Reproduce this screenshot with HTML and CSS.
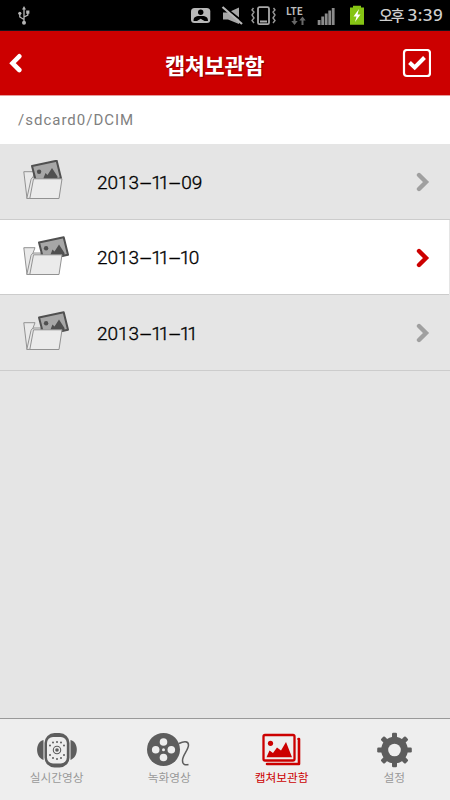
FILE: index.html
```
<!DOCTYPE html>
<html lang="ko">
<head>
<meta charset="utf-8">
<title>캡쳐보관함</title>
<link rel="stylesheet" href="styles.css">
</head>
<body>
<svg class="defs" width="0" height="0">
  <defs>
    <g id="photo">
      <path d="M1.5 6.5 26.2 1.2 30.5 18.8 6 24Z" fill="#a7a7a7" stroke="#505050" stroke-width="2" stroke-linejoin="round"/>
      <circle cx="8.6" cy="12.3" r="2.2" fill="#505050"/>
      <path d="M13 18.500 15 13.500 17 15.500 21.500 8.500 27 17 27 20 13 22Z" fill="#505050"/>
    </g>
    <g id="folder-back" fill="#e9e9e9" stroke="#929292" stroke-width="1">
      <path d="M7 38.500H4L.8 11.700H12L10 17Z"/>
      <path d="M3.800 38.500 8 19.500Q9 17 11 17H18L14 38Z"/>
    </g>
    <path id="folder-front" d="M10.500 18.800H39L36 38.500H6.800Z" fill="#ebebeb" stroke="#929292" stroke-width="1"/>
    <path id="arrow" d="M3 3 10 10 3 17" fill="none" stroke="currentColor" stroke-width="4.400" stroke-linecap="round" stroke-linejoin="miter"/>
  </defs>
</svg>
<div class="screen">
  <div class="status">
    <svg class="usb" width="14" height="20" viewBox="17 6 14 20" fill="none" stroke="#b5b5b5" stroke-width="1.300">
      <path d="M24 9V22M24 19.500 19.800 17V14M24 17 27.800 15V12"/>
      <path d="M24 6 22 9.500H26Z" fill="#b5b5b5" stroke="none"/>
      <g fill="#b5b5b5" stroke="none"><circle cx="24" cy="22.800" r="2"/><circle cx="19.800" cy="13.300" r="1.600"/><rect x="26.200" y="10.500" width="3.200" height="3.200"/></g>
    </svg>
    <div class="tray">
      <svg width="174" height="24" viewBox="190 4 174 24">
        <rect x="191" y="8" width="19.300" height="15" rx="3.500" fill="#b8b8b8"/>
        <circle cx="200.700" cy="12.200" r="2.700"/>
        <path d="M193.500 21C193.500 16 197 16 200.700 16S208 16 208 21H204.500L200.700 18.800 197 21Z"/>
        <path d="M223 12.500H228L239 7.500V24L228 19.500H223Z" fill="#a7a7a7"/>
        <path d="M223 6 244 22.500" stroke="#000" stroke-width="2"/>
        <path d="M222.500 7 242 24" stroke="#b8b8b8" stroke-width="2.200"/>
        <rect x="258" y="7.200" width="11" height="17" rx="1.500" fill="none" stroke="#aaa" stroke-width="1.800"/>
        <path d="M260 21.500H267" stroke="#aaa" stroke-width="2"/>
        <path d="M253.500 8 252 10 254 12 252 15 254 18 252 20.500 254 23M273.500 8 275 10 273 12 275 15 273 18 275 20.500 273 23" stroke="#999" fill="none" stroke-width="1.400"/>
        <text x="286" y="14.500" class="lte">LTE</text>
        <path d="M294.500 17V23M302.500 25V18" stroke="#686868" stroke-width="2"/>
        <path d="M291.300 21H297.700L294.500 25ZM299.300 20.500H305.700L302.500 16.500Z" fill="#686868"/>
        <g fill="#8b8b8b"><rect x="317.700" y="20" width="2.800" height="5"/><rect x="321.300" y="16.500" width="2.800" height="8.500"/><rect x="324.800" y="13.500" width="2.800" height="11.500"/><rect x="328.300" y="10.500" width="2.800" height="14.500"/><rect x="331.800" y="8" width="2.800" height="17"/></g>
        <path d="M350 7.500H353V5.800H361V7.500H364V24.800H350Z" fill="#86c414"/>
        <path d="M359 9 353.500 16.500H356.500L355 22 360.500 14.500H357.500Z" fill="#fff"/>
      </svg>
      <div class="clock"><span class="ampm">오후</span><span class="time">3:39</span></div>
    </div>
  </div>

  <header class="header">
    <svg class="back" width="14" height="20" viewBox="9 52 14 20"><path d="M19.300 55.300 12.500 62.200 19.300 69" fill="none" stroke="#fff" stroke-width="4.600" stroke-linecap="round"/></svg>
    <h1>캡쳐보관함</h1>
    <svg class="check" width="29" height="29" viewBox="402 49 29 29"><rect x="404" y="50" width="26" height="26" rx="3" fill="none" stroke="#fff" stroke-width="2.200"/><path d="M409.500 62.500 414.700 67.500 424.500 57.500" fill="none" stroke="#fff" stroke-width="4"/></svg>
  </header>

  <div class="path">/sdcard0/DCIM</div>

  <ul class="list">
    <li class="row">
      <svg class="folder" width="48" height="42" viewBox="0 0 48 42"><use href="#folder-back"/><use href="#photo" x="7.500" y="-.5"/><use href="#folder-front"/></svg>
      <span class="date">2013<i>-</i><b>11</b><i>-</i>09</span>
      <svg class="arrow" width="14" height="20" viewBox="0 0 14 20"><use href="#arrow"/></svg>
    </li>
    <li class="row selected">
      <svg class="folder" width="48" height="42" viewBox="0 0 48 42"><use href="#folder-back"/><use href="#photo" x="14.500" y="0"/><use href="#folder-front"/></svg>
      <span class="date">2013<i>-</i><b>11</b><i>-</i><b>1</b>0</span>
      <svg class="arrow" width="14" height="20" viewBox="0 0 14 20"><use href="#arrow"/></svg>
    </li>
    <li class="row">
      <svg class="folder" width="48" height="42" viewBox="0 0 48 42"><use href="#folder-back"/><use href="#photo" x="14.500" y="0"/><use href="#folder-front"/></svg>
      <span class="date">2013<i>-</i><b>11</b><i>-</i><b>11</b></span>
      <svg class="arrow" width="14" height="20" viewBox="0 0 14 20"><use href="#arrow"/></svg>
    </li>
  </ul>

  <nav class="tabs">
    <div class="tab">
      <svg width="44" height="36" viewBox="35 732 44 36" fill="#5d5d5d">
        <path d="M43.500 740C35 742 35 757 43.500 760ZM70.500 740C79 742 79 757 70.500 760Z"/>
        <rect x="44.500" y="733" width="25" height="34.500" rx="10"/>
        <rect x="47" y="737" width="19.800" height="26.500" rx="6" fill="#eee"/>
        <circle cx="57" cy="750" r="3.700" fill="none" stroke="#5d5d5d" stroke-width="1.100"/><circle cx="57" cy="750" r="1.800"/>
        <g><circle cx="57" cy="742" r="1"/><circle cx="53" cy="742.500" r="1"/><circle cx="61" cy="742.500" r="1"/><circle cx="50" cy="745.500" r="1"/><circle cx="64" cy="745.500" r="1"/><circle cx="50" cy="755" r="1"/><circle cx="64" cy="755" r="1"/><circle cx="53" cy="758" r="1"/><circle cx="61" cy="758" r="1"/><circle cx="57" cy="759" r="1"/></g>
      </svg>
      <span>실시간영상</span>
    </div>
    <div class="tab">
      <svg width="44" height="36" viewBox="147 732 44 36">
        <circle cx="163.500" cy="749.500" r="16.500" fill="#5d5d5d"/>
        <g fill="#eee"><circle cx="163.500" cy="742" r="3.800"/><circle cx="163.500" cy="757.500" r="3.800"/><circle cx="155.700" cy="749.800" r="3.800"/><circle cx="171.300" cy="749.800" r="3.800"/><circle cx="163.500" cy="749.800" r="1.500"/></g>
        <path d="M179 743.500C183 741.500 188.500 740.500 188.500 745C188.500 750 182.500 755 182.500 760.500C182.500 764.500 185 765.500 188.500 764.500" fill="none" stroke="#5d5d5d" stroke-width="1.500"/>
      </svg>
      <span>녹화영상</span>
    </div>
    <div class="tab active">
      <svg width="44" height="36" viewBox="260 732 44 36">
        <path d="M298.500 739H299V764H267" fill="none" stroke="#c00" stroke-width="2.600" stroke-linecap="round" stroke-linejoin="round"/>
        <rect x="263.500" y="735" width="31" height="25.500" rx="1.500" fill="#eee" stroke="#c00" stroke-width="2.300"/>
        <circle cx="270.500" cy="743.300" r="2.600" fill="#c00"/>
        <path d="M266.500 757.200 269.500 750.500 273 753 277 747.500 281 750.500 286 742 292 757.200Z" fill="#c00"/>
      </svg>
      <span>캡쳐보관함</span>
    </div>
    <div class="tab">
      <svg width="44" height="36" viewBox="-22.500 -18 44 36" fill="#5d5d5d">
        <g id="teeth"><rect x="-2.500" y="-17.300" width="5" height="34.600" rx="1.200"/><rect x="-17.300" y="-2.500" width="34.600" height="5" rx="1.200"/></g>
        <use href="#teeth" transform="rotate(45)"/>
        <circle r="13.300"/><circle r="6.300" fill="#eee"/>
      </svg>
      <span>설정</span>
    </div>
  </nav>
</div>
</body>
</html>
```
FILE: styles.css
```
* { box-sizing: border-box; }
body { margin: 0; font-family: "Noto Sans CJK KR", sans-serif; }
svg { display: block; flex: none; }
.defs { position: absolute; }
.screen { width: 450px; height: 800px; display: flex; flex-direction: column; background: #e5e5e5; overflow: hidden; }
.status { height: 31px; flex: none; background: #000; display: flex; align-items: flex-start; justify-content: space-between; padding: 4px 7px 0 17px; border-bottom: 1px solid #14141c; }
.usb { margin-top: 2px; }
.tray { display: flex; gap: 15px; }
.lte { font: bold 10px "Noto Sans CJK KR", sans-serif; fill: #bbb; }
.clock { width: 64px; display: flex; gap: 5px; color: #d0d0d0; white-space: nowrap; line-height: 22px; }
.ampm { font-size: 15px; letter-spacing: -2px; width: 24px; font-weight: 500; }
.time { font-family: "Noto Sans", sans-serif; font-size: 17px; font-weight: 500; letter-spacing: .4px; }
.header { height: 65px; flex: none; background: #c00; border-bottom: 1px solid #e69a9a; display: flex; align-items: center; justify-content: space-between; padding: 0 19px 0 9px; }
.header h1 { margin: 1px 0 0 4px; font-size: 22px; line-height: 30px; font-weight: 700; letter-spacing: -.4px; color: #fff; text-shadow: 1px 1px 1px #7d0000; }
.path { height: 48px; flex: none; background: #fff; padding-left: 18px; font: 15px/49px Roboto, sans-serif; letter-spacing: 1px; color: #808080; }
.list { list-style: none; margin: 0; padding: 0; flex: 1; }
.row { height: 75.500px; display: flex; align-items: center; padding: 2px 20px 0 23px; border-bottom: 1px solid #ccc; color: #a0a0a0; }
.selected { background: #fff; color: #c00; margin-right: 1px; padding-right: 19px; }
.folder { margin-top: -2px; }
.date { flex: 1; margin-left: 26px; font-family: Roboto, sans-serif; font-size: 19px; font-weight: 300; letter-spacing: 0; color: #000; white-space: nowrap; -webkit-text-stroke: .35px #000; }
.date i { display: inline-block; width: 13.500px; text-align: center; font-style: normal; transform: scaleX(2.200); }
.date b { font-weight: inherit; letter-spacing: -3px; margin: 0 1.500px 0 -1.500px; }
.tabs { height: 82px; flex: none; display: flex; background: #eee; border-top: 1px solid #999; }
.tab { flex: 1; padding: 13px 0 0 1px; display: flex; flex-direction: column; align-items: center; color: #999; font-size: 11.700px; line-height: 17px; }
.active { color: #c00; }
```
